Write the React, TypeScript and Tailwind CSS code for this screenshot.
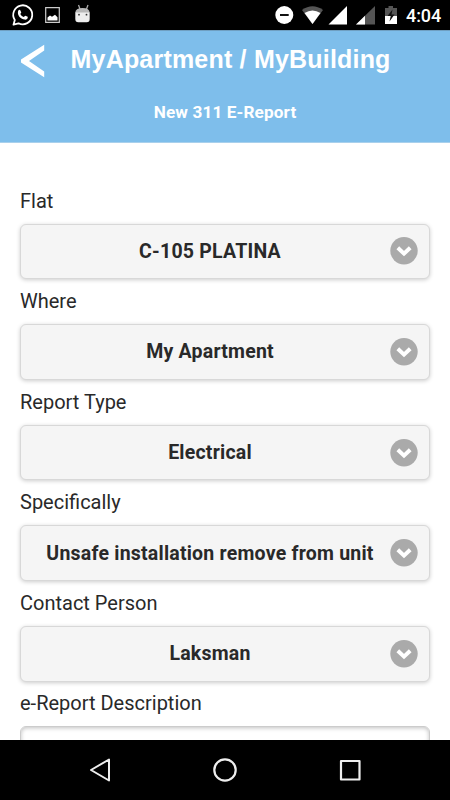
import React from "react";

const fields = [
  { label: "Flat", value: "C-105 PLATINA" },
  { label: "Where", value: "My Apartment" },
  { label: "Report Type", value: "Electrical" },
  { label: "Specifically", value: "Unsafe installation remove from unit" },
  { label: "Contact Person", value: "Laksman" },
];

function StatusBar() {
  return (
    <div className="flex h-[30px] shrink-0 items-center justify-between bg-black text-white">
      <svg width="100" height="30" viewBox="0 0 100 30" fill="none">
        <path d="M13.500 24.700 14.800 20A9.500 9.500 0 1 1 18.500 23.300Z" stroke="#fff" strokeWidth="1.800" strokeLinejoin="round" />
        <path d="M18.2 10.800c.7-1.400 1.700-1.300 2.100-.6l.9 2.100c.2.6-.7 1.300-.9 1.700.8 1.600 2 2.500 3.500 3.100.5-.3 1.100-1.500 1.600-1.400l2.300 1.100c.6 2.100-1.700 3-3 2.800-3.900-.6-6.800-4-6.800-6.700 0-.8.1-1.500.3-2.100Z" fill="#fff" />
        <path d="M45.700 7.700h13.600v14.600H45.700Z" stroke="#ccc" strokeWidth="1.200" />
        <path d="M47.500 20.500v-3l2.500-2 2 1.300 3-2 2.500 2.500v3.200Z" fill="#fff" />
        <path d="m78.500 5 1.500 4M88 5l-1.500 4" stroke="#aaa" strokeWidth="1.300" />
        <path d="M75.300 13q0-5 7.200-5t7.200 5Z" fill="#b8b8b8" />
        <path d="M75.300 12.500h14.400V19q0 3.200-3 3.200h-8.400q-3 0-3-3.200Z" fill="#eee" />
        <circle cx="79" cy="14.700" r=".9" fill="#333" />
        <circle cx="86.500" cy="14.700" r=".9" fill="#333" />
      </svg>
      <div className="flex items-center">
        <svg width="132" height="30" viewBox="272 0 132 30" fill="none">
          <circle cx="284.300" cy="15" r="9" fill="#fff" />
          <path d="M280 15h8.700" stroke="#111" strokeWidth="2" />
          <path d="M302 10q10.500-7.500 21 0L312.500 24Z" fill="#555" />
          <path d="M304.500 13q8-5 16 0L312.500 24Z" fill="#fff" />
          <path d="M347 6v18.500H328.500Z" fill="#fff" />
          <path d="M375 6v18.500H356Z" fill="#555" />
          <path d="M365 15.700v8.800H356Z" fill="#fff" />
          <path d="M388.500 6h4.500v2h4v16h-12V8h3.500Z" fill="#555" />
          <path d="M385 16h12v8h-12Z" fill="#fff" />
          <path d="m392.500 9.500-5 6.500h3.200l-1.200 5.500 5-7h-3Z" fill="#111" />
        </svg>
        <span className="w-[46px] pt-[2px] pl-[2px] text-[18px] leading-[30px] font-medium tracking-[-0.100px]">4:04</span>
      </div>
    </div>
  );
}

function Header() {
  return (
    <header className="h-[113px] shrink-0 border-t border-b border-t-[#6f9fc1] border-b-[#a9d0ec] bg-[#7ebeeb] text-white">
      <div className="flex h-[59px] items-center pl-[20px]">
        <svg width="26" height="36" viewBox="0 0 26 36">
          <path d="M24.200 1.700v5.800L9 18l15.200 10.500v5.700L1 19.600v-3.200Z" fill="#fff" />
        </svg>
        <h1 className="ml-[24.500px] whitespace-nowrap pb-[4px] font-['Liberation_Sans',Arial,sans-serif] text-[25px] leading-[30px] font-bold tracking-[0.200px]">MyApartment / MyBuilding</h1>
      </div>
      <h2 className="mt-[11px] text-center text-[17.200px] leading-[22px] font-bold tracking-[0.120px]">New 311 E-Report</h2>
    </header>
  );
}

function SelectField({ label, value }: { label: string; value: string }) {
  return (
    <div className="h-[100.600px] shrink-0">
      <div className="h-[34px] text-[20px] leading-[22px]">{label}</div>
      <button className="flex h-[55.600px] w-full items-center rounded-[6px] border border-[#d8d8d8] bg-[#f5f5f5] pr-[11px] shadow-[0_1px_4px_rgba(0,0,0,0.2)]">
        <span className="flex-1 whitespace-nowrap pl-[1px] text-center text-[19.500px] font-bold tracking-[0.220px]">{value}</span>
        <svg className="-ml-[8px] shrink-0" width="28" height="28" viewBox="0 0 28 28" fill="none">
          <circle cx="14" cy="13.700" r="13.700" fill="#aaa" />
          <path d="m7.800 10.800 6.200 5.800 6.200-5.800" stroke="#fff" strokeWidth="4" />
        </svg>
      </button>
    </div>
  );
}

export default function App() {
  return (
    <div className="flex h-[800px] w-[450px] flex-col overflow-hidden bg-white font-[Roboto,sans-serif] text-[#292929]">
      <StatusBar />
      <Header />
      <main className="flex min-h-0 flex-1 flex-col overflow-hidden px-[20px] pt-[46.700px]">
        {fields.map((field) => (
          <SelectField key={field.label} {...field} />
        ))}
        <div className="h-[33.500px] shrink-0 text-[20px] leading-[21px]">e-Report Description</div>
        <div className="h-[100px] shrink-0 rounded-[6px] border border-[#ccc] bg-white shadow-[inset_0_1px_4px_rgba(0,0,0,0.25)]" />
      </main>
      <nav className="flex h-[60px] shrink-0 items-center justify-between bg-black px-[88px]">
        <svg width="24" height="26" viewBox="0 0 24 26" fill="none" stroke="#eee" strokeWidth="2" strokeLinejoin="round"><path d="M21 2.500v21L3 13Z" /></svg>
        <svg width="26" height="26" viewBox="0 0 26 26" fill="none" stroke="#eee" strokeWidth="2.200"><circle cx="13" cy="13" r="10.700" /></svg>
        <svg width="24" height="26" viewBox="0 0 24 26" fill="none" stroke="#eee" strokeWidth="2.200" strokeLinejoin="round"><path d="M3 4h18.500v18.500H3Z" /></svg>
      </nav>
    </div>
  );
}
